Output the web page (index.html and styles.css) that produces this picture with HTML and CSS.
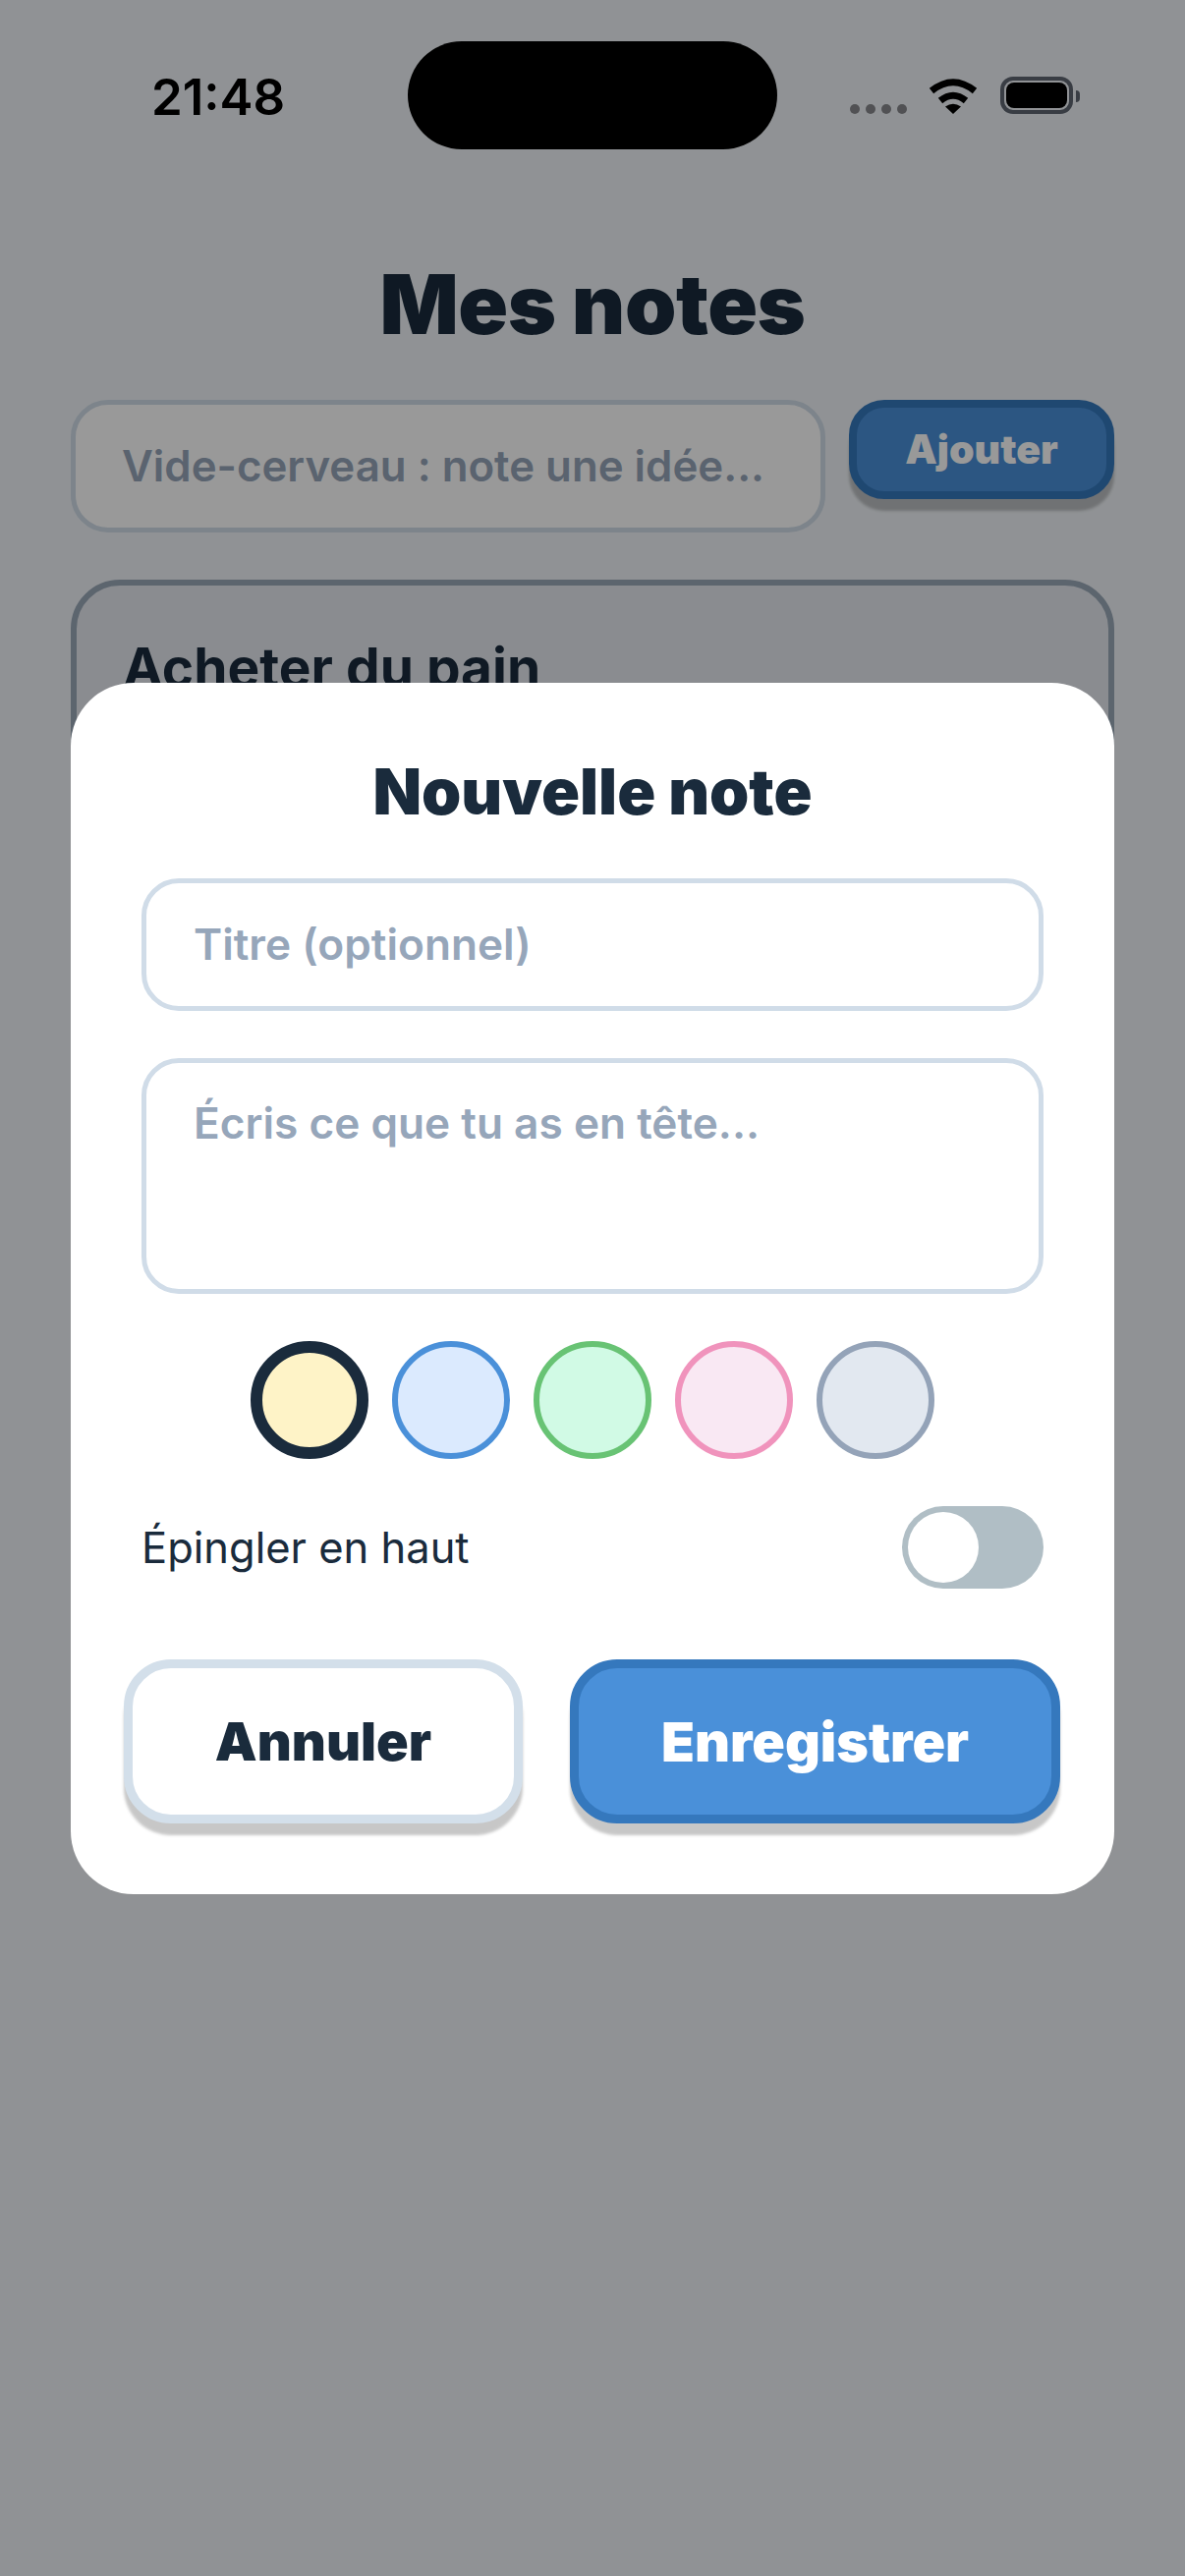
FILE: index.html
```html
<!doctype html>
<html lang="fr">

<head>
    <meta charset="utf-8">
    <title>Mes notes</title>
    <meta name="viewport" content="width=device-width, initial-scale=1">
    <link rel="stylesheet" href="styles.css">
</head>

<body>
    <div class="screen">
        <div class="status-bar">
            <span class="status-time">21:48</span>
            <span class="island"></span>
            <div class="status-icons">
                <div class="signal">
                    <span class="signal-dot"></span>
                    <span class="signal-dot"></span>
                    <span class="signal-dot"></span>
                    <span class="signal-dot"></span>
                </div>
                <svg class="wifi" width="50" height="38" viewBox="0 0 50 38">
                    <path d="M3 13.5 Q25 -4 47 13.5" fill="none" stroke="#000" stroke-width="7" />
                    <path d="M12 23.5 Q25 13 38 23.5" fill="none" stroke="#000" stroke-width="7" />
                    <path d="M25 37 L17 29.5 Q25 24 33 29.5 Z" fill="#000" />
                </svg>
                <div class="battery">
                    <span class="battery-level"></span>
                </div>
                <span class="battery-nub"></span>
            </div>
        </div>

        <h1 class="page-title">Mes notes</h1>

        <div class="quick-add">
            <div class="quick-input">Vide-cerveau : note une idée...</div>
            <div class="quick-button">Ajouter</div>
        </div>

        <div class="note-card">
            <h2 class="note-title">Acheter du pain</h2>
        </div>

        <div class="overlay">
            <div class="modal">
                <h2 class="modal-title">Nouvelle note</h2>
                <div class="field field-title">Titre (optionnel)</div>
                <div class="field field-body">Écris ce que tu as en tête...</div>

                <div class="swatches">
                    <span class="swatch swatch-yellow"></span>
                    <span class="swatch swatch-blue"></span>
                    <span class="swatch swatch-green"></span>
                    <span class="swatch swatch-pink"></span>
                    <span class="swatch swatch-grey"></span>
                </div>

                <div class="pin-row">
                    <span class="pin-label">Épingler en haut</span>
                    <span class="toggle"><span class="toggle-thumb"></span></span>
                </div>

                <div class="actions">
                    <div class="btn btn-cancel">Annuler</div>
                    <div class="btn btn-save">Enregistrer</div>
                </div>
            </div>
        </div>
    </div>
</body>

</html>
```

FILE: styles.css
```css
* {
    box-sizing: border-box;
    margin: 0;
}

html,
body {
    width: 1206px;
    height: 2622px;
    overflow: hidden;
}

body {
    font-family: Inter, "Noto Sans", sans-serif;
    color: #1a2b3c;
    background: #f0f4f8;
}

.screen {
    position: relative;
    width: 1206px;
    height: 2622px;
    padding: 42px 72px 0;
}

/* status bar */

.status-bar {
    display: flex;
    align-items: flex-start;
    height: 110px;
}

.status-time {
    width: 343px;
    padding: 27px 0 0 82px;
    font-size: 51px;
    font-weight: 600;
    line-height: 60px;
    color: #000;
}

.island {
    width: 376px;
    height: 110px;
    background: #000;
    border-radius: 55px;
}

.status-icons {
    position: relative;
    display: flex;
    align-items: flex-start;
    padding: 36px 0 0 74px;
}

.signal {
    display: flex;
    gap: 6px;
    margin-top: 28px;
}

.signal-dot {
    width: 10px;
    height: 10px;
    border-radius: 50%;
    background: #87888c;
}

.wifi {
    display: block;
    margin: 1px 0 0 22px;
}

.battery {
    width: 74px;
    height: 38px;
    margin-left: 23px;
    padding: 6px;
    background: transparent;
    border-radius: 13px;
    box-shadow: inset 0 0 0 4px #5f6672;
}

.battery-level {
    display: block;
    width: 100%;
    height: 100%;
    background: #000;
    border-radius: 8px;
}

.battery-nub {
    width: 4px;
    height: 12px;
    margin: 14px 0 0 3px;
    background: #5f6672;
    border-radius: 0 4px 4px 0;
}

/* page behind the modal */

.page-title {
    margin-top: 108px;
    font-size: 84px;
    font-weight: 900;
    line-height: 100px;
    text-align: center;
    letter-spacing: -0.5px;
}

.quick-add {
    display: flex;
    align-items: flex-start;
    gap: 24px;
    margin-top: 47px;
}

.quick-input {
    flex: 1;
    height: 135px;
    padding-left: 47px;
    font-size: 43.8px;
    font-weight: 600;
    line-height: 125px;
    color: #96a6ba;
    background: #fff;
    border: 5px solid #d0dce8;
    border-radius: 38px;
}

.quick-button {
    width: 270px;
    height: 101px;
    font-size: 41px;
    font-weight: 900;
    line-height: 85px;
    text-align: center;
    color: #fff;
    background: #4a90d9;
    border: 8px solid #3578bd;
    border-radius: 36px;
    box-shadow: 0 12px 3px rgba(0, 0, 0, 0.22);
}

.note-card {
    height: 560px;
    margin-top: 48px;
    padding: 50px 47px 0;
    background: #e6eaf0;
    border: 6px solid #9aa8b8;
    border-radius: 50px;
}

.note-title {
    font-size: 55px;
    font-weight: 700;
    line-height: 66px;
}

/* modal */

.overlay {
    position: absolute;
    inset: 0;
    display: flex;
    align-items: center;
    justify-content: center;
    padding-top: 1px;
    background: rgba(0, 0, 0, 0.4);
}

.modal {
    width: 1062px;
    height: 1233px;
    padding: 71px 72px 0;
    background: #fff;
    border-radius: 64px;
}

.modal-title {
    font-size: 64.5px;
    font-weight: 900;
    line-height: 80px;
    text-align: center;
    margin-bottom: 48px;
}

.field {
    padding-left: 48px;
    font-size: 44.2px;
    font-weight: 600;
    color: #96a6ba;
    background: #fff;
    border: 5px solid #d0dce8;
    border-radius: 38px;
}

.field-title {
    height: 135px;
    line-height: 125px;
}

.field-body {
    height: 240px;
    margin-top: 48px;
    padding-top: 31px;
    line-height: 60px;
}

.swatches {
    display: flex;
    justify-content: center;
    gap: 24px;
    margin-top: 48px;
}

.swatch {
    width: 120px;
    height: 120px;
    border: 6px solid;
    border-radius: 50%;
}

.swatch-yellow {
    background: #fef3c7;
    border: 12px solid #1a2b3c;
}

.swatch-blue {
    background: #dbeafe;
    border-color: #4a90d9;
}

.swatch-green {
    background: #d1fae5;
    border-color: #68c374;
}

.swatch-pink {
    background: #f9e8f3;
    border-color: #f093bc;
}

.swatch-grey {
    background: #e2e8f0;
    border-color: #94a3b8;
}

.pin-row {
    display: flex;
    align-items: center;
    justify-content: space-between;
    margin-top: 48px;
}

.pin-label {
    font-size: 43.5px;
    line-height: 84px;
}

.toggle {
    display: block;
    width: 144px;
    height: 84px;
    padding: 6px;
    background: #b0bec5;
    border-radius: 42px;
}

.toggle-thumb {
    display: block;
    width: 72px;
    height: 72px;
    background: #fff;
    border-radius: 50%;
}

.actions {
    display: grid;
    grid-template-columns: 406px 499px;
    gap: 48px;
    margin: 72px -18px 0;
}

.btn {
    height: 167px;
    font-size: 54px;
    font-weight: 900;
    line-height: 149px;
    text-align: center;
    border: 9px solid;
    border-radius: 48px;
    box-shadow: 0 12px 3px rgba(0, 0, 0, 0.22);
}

.btn-cancel {
    background: #fff;
    border-color: #d3dfea;
}

.btn-save {
    font-size: 55.5px;
    color: #fff;
    background: #4a90d9;
    border-color: #3578bd;
}
```
